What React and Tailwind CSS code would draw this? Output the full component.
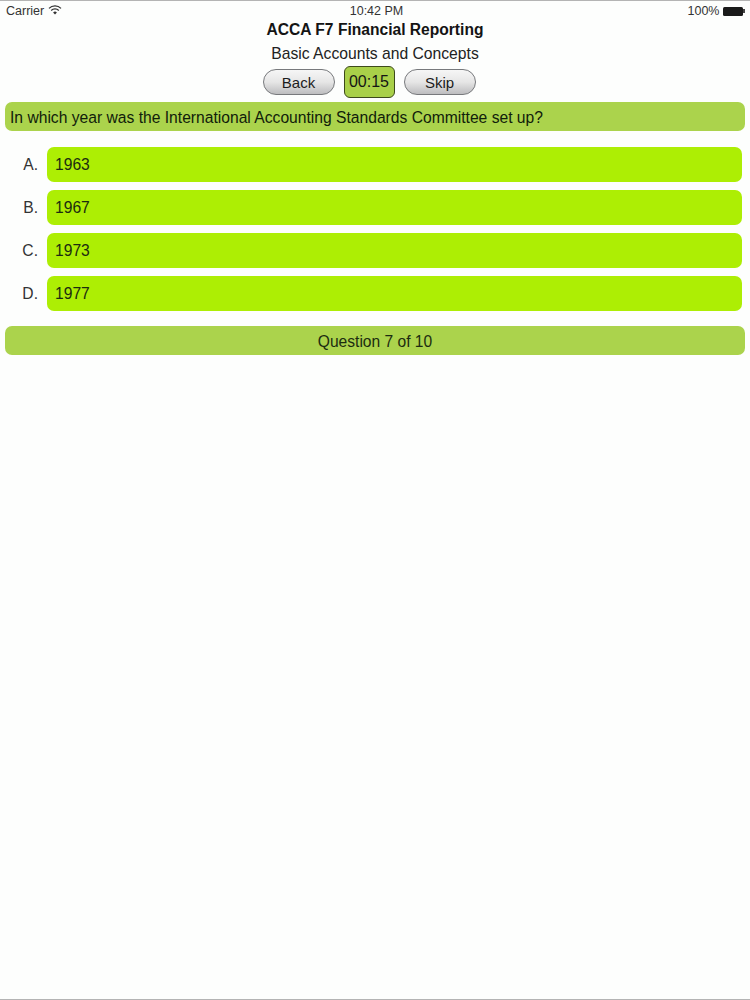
const options = [
  ["A.", "1963"],
  ["B.", "1967"],
  ["C.", "1973"],
  ["D.", "1977"],
];

function Wifi() {
  return (
    <svg width="14" height="10" viewBox="0 0 14 10" className="mb-[2px] ml-[4px]">
      <path d="M1 3.4 A8.5 8.5 0 0 1 13 3.4" fill="none" stroke="#333" strokeWidth="1.3" />
      <path d="M3.2 5.5 A5.4 5.4 0 0 1 10.8 5.5" fill="none" stroke="#333" strokeWidth="1.3" />
      <path d="M5.1 7.4 A2.7 2.7 0 0 1 8.9 7.4 L7 9.6 Z" fill="#333" />
    </svg>
  );
}

function PillButton({ children }) {
  return (
    <button className="flex h-[26px] w-[72px] items-center justify-center rounded-full border border-[#77797c] bg-gradient-to-b from-[#f6f6f6] via-[#e6e6e6] to-[#bdbdbf] pt-[2px] text-[15px] text-[#1c1c1c]">
      {children}
    </button>
  );
}

export default function App() {
  return (
    <div className="flex h-[1000px] w-[750px] flex-col overflow-hidden border-y border-[#b4b4b4] bg-[#fdfefd] font-['Liberation_Sans',Arial,sans-serif] text-[#141414]">
      <div className="flex h-[19px] items-center justify-between pt-[1px] pr-[5px] pl-[6px] text-[12.5px] text-[#333]">
        <div className="flex w-[120px] items-center">
          Carrier
          <Wifi />
        </div>
        <div className="pl-[2px]">10:42 PM</div>
        <div className="flex w-[120px] items-center justify-end">
          100%
          <div className="ml-[4px] flex items-center">
            <div className="h-[9px] w-[20px] rounded-[1.5px] bg-[#1a1a1a]" />
            <div className="h-[4px] w-[1.5px] bg-[#444]" />
          </div>
        </div>
      </div>

      <div className="mt-[1px] text-center text-[15.6px] leading-[18px] font-bold">
        ACCA F7 Financial Reporting
      </div>
      <div className="mt-[6px] text-center text-[15.7px] leading-[18px] text-[#222]">
        Basic Accounts and Concepts
      </div>

      <div className="mt-[3px] flex items-center justify-center gap-[9px] pr-[12px]">
        <PillButton>Back</PillButton>
        <div className="flex h-[32px] w-[51px] items-center justify-center rounded-[6px] border border-[#3d4a1c] bg-[#a9d049] text-[16px]">
          00:15
        </div>
        <PillButton>Skip</PillButton>
      </div>

      <div className="mx-[5px] mt-[4px] flex h-[29px] items-center rounded-[7px] bg-[#abd34c] pt-[2px] pl-[5px] text-[15.65px] text-[#10200a]">
        In which year was the International Accounting Standards Committee set up?
      </div>

      <div className="mt-[16px] flex flex-col gap-[8px] pr-[8px]">
        {options.map(([letter, year]) => (
          <div key={letter} className="flex items-center">
            <div className="w-[47px] pr-[9px] text-right text-[15.65px] text-[#333]">{letter}</div>
            <div className="flex h-[35px] flex-1 items-center rounded-[7px] bg-[#adee04] pl-[8px] text-[15.65px] text-[#1c2c10]">
              {year}
            </div>
          </div>
        ))}
      </div>

      <div className="mx-[5px] mt-[15px] flex h-[29px] items-center justify-center rounded-[7px] bg-[#abd34c] pt-[2px] text-[15.6px] text-[#1c2c10]">
        Question 7 of 10
      </div>
    </div>
  );
}
